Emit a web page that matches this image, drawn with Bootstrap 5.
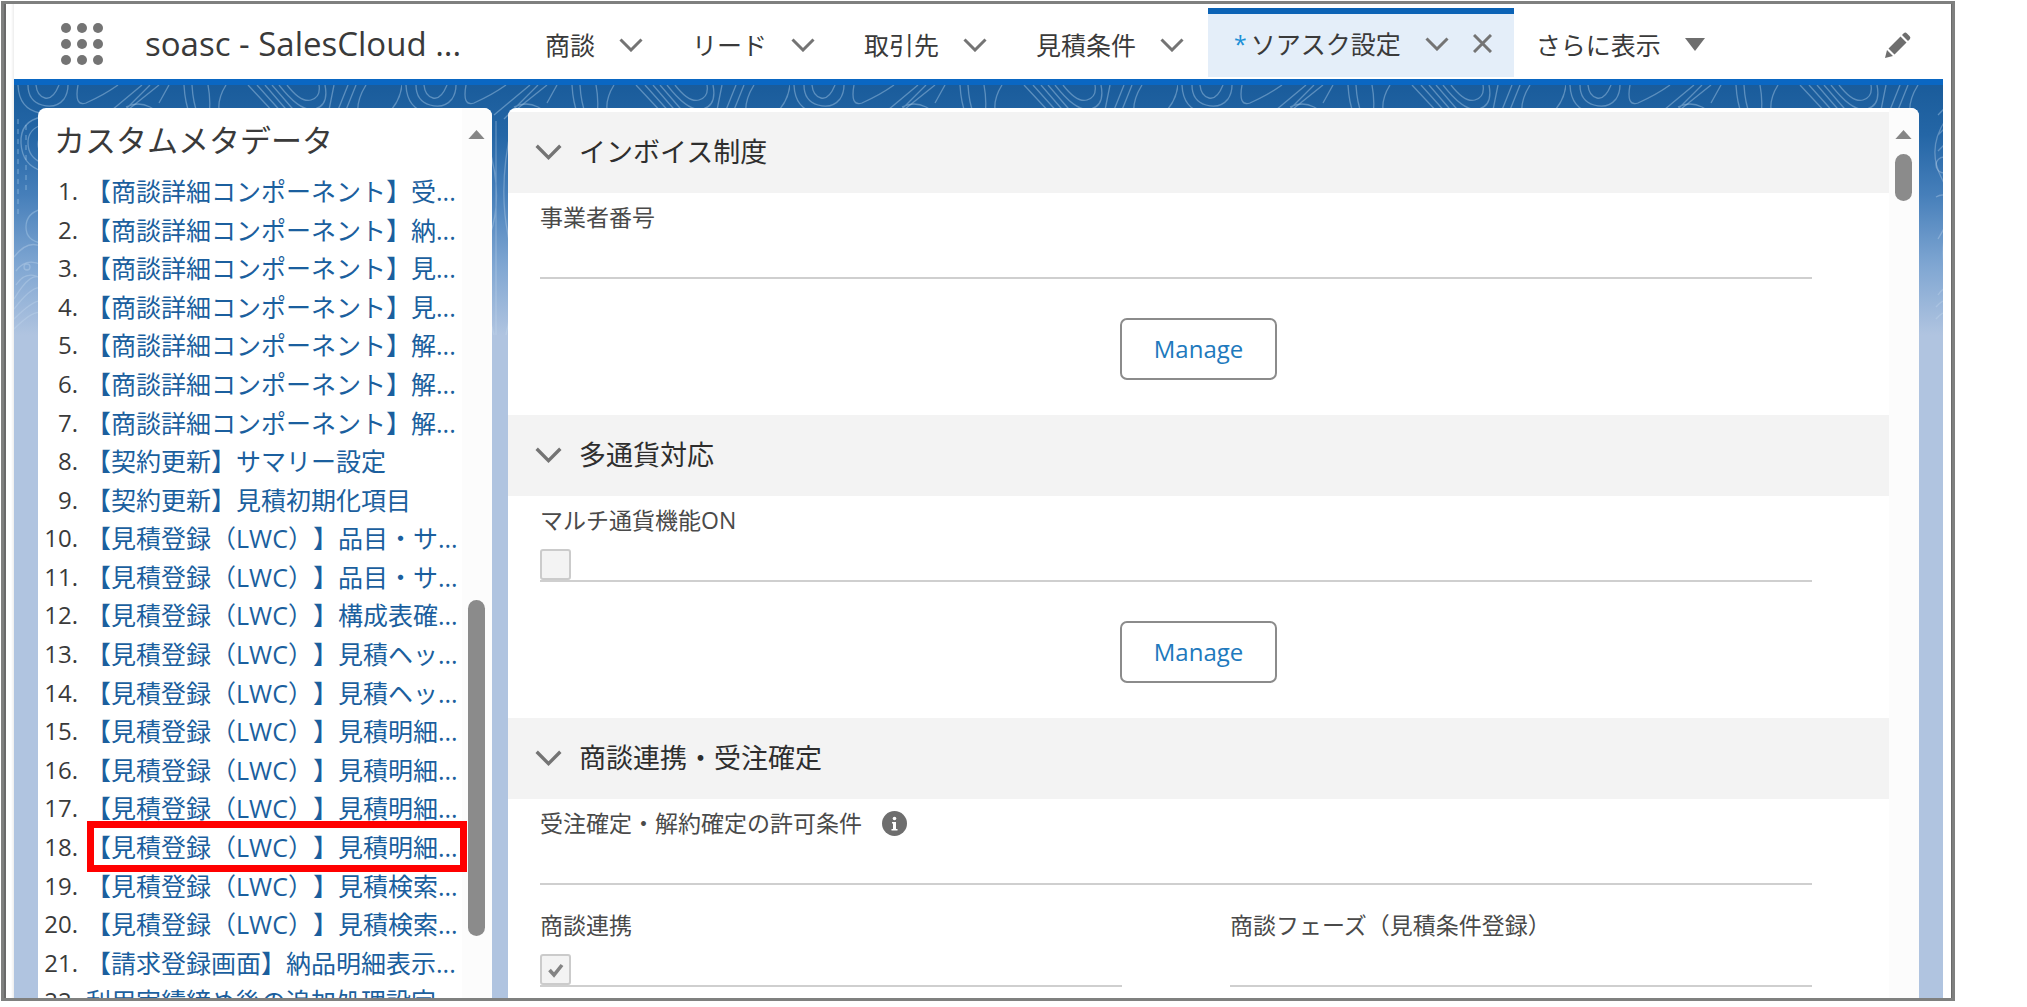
<!DOCTYPE html>
<html lang="ja">
<head>
<meta charset="utf-8">
<meta name="viewport" content="width=device-width, initial-scale=1">
<title>ソアスク設定</title>
<link rel="stylesheet" href="https://cdn.jsdelivr.net/npm/bootstrap@5.3.0/dist/css/bootstrap.min.css">
<style>
  :root { --ink: #3a3a3a; --icon: #747474; --link: #1b5f9e; --rule: #cfcfcf; }
  body { height: 100vh; padding: 1px 72px 6px 1px; overflow: hidden; background: #fff; color: var(--ink);
    font-family: "Open Sans", "Noto Sans CJK JP", sans-serif; font-size: 25px; line-height: 38px;
    text-spacing-trim: space-all; font-feature-settings: "chws" 0, "halt" 0; }
  .window-frame { border: 3px solid #7f807f; height: 100%; }
  .window-inner { border-left: 2px solid #6a6a6a; border-right: 1px solid #6a6a6a; padding: 0 8px; background: linear-gradient(90deg, #fff 5px, #ededed 8px, #fff 12px); }
  a { text-decoration: none; color: inherit; }

  .app-nav { height: 75px; background: #fff; }
  .launcher { width: 42px; margin-left: 47px; padding-top: 4px; }
  .app-name { width: 350px; margin-left: 42px; margin-right: 25px; padding-top: 4px; font-size: 33px; }
  .app-name, .tab-link { white-space: nowrap; }
  .tab-link { padding: 6px 24px 0 25px; gap: 24px; align-items: center; display: flex; }
  .tab-link.current { margin-top: 4px; padding: 0 22px 4px 26px; border-top: 6px solid #0b63b6; background: #e4eef9; margin-bottom: 2px; }
  .tab-link.current + .tab-link { padding-left: 22px; }
  .tab-link svg, .launcher svg { flex: none; display: block; }
  .star { color: #1b8fd6; margin-right: -20px; font-size: 23px; }
  .icon-btn { border: 0; background: none; padding: 0; line-height: 0; }

  .stage { border-top: 6px solid #0a67c3; padding: 23px 24px 0; gap: 16px;
    background: linear-gradient(#1a5c9b 0, #2466a6 50px, #467fba 110px, #7fa6d2 180px, #b0c4e0 250px); }
  .contours { position: absolute; top: 0; left: 0; width: 100%; height: 250px; }
  .pane { background: #fff; border-radius: 8px 8px 0 0; overflow: hidden; position: relative; }
  .side-pane { width: 454px; flex: none; }
  .side-title { font-size: 31px; line-height: 48px; padding: 8px 0 8px 16px; margin: 0; font-weight: 400; }
  .meta-list { list-style: none; margin: 0 0 -23px; padding: 0; display: grid; grid-auto-rows: 1fr; flex: 1; }
  .meta-list li { position: relative; display: flex; white-space: nowrap; }
  .meta-no { width: 40px; text-align: right; margin-right: 8px; flex: none; font-size: 24px; }
  .meta-list a { color: var(--link); }
  .picked::after { content: ""; position: absolute; inset: -7px -5px -5px 49px; border: 7px solid #f00; z-index: 1; }
  .track { width: 30px; flex: none; background: #fcfcfc; padding: 22px 7px 0 6px; }
  .thumb { background: #8b8b8b; border-radius: 9px; width: 17px; }
  .thumb-low { margin-top: 461px; height: 336px; }
  .thumb-top { margin-top: 15px; height: 47px; }
  .track svg { display: block; }

  .sect-head { height: 81px; background: #f3f3f3; padding: 0 0 0 27px; font-size: 27px; font-weight: 400; color: #2e2e2e; margin: 0; }
  .sect-head button { color: inherit; border: 0; background: none; padding: 0; gap: 17px; }
  .sect-body { padding: 0 77px 35px 32px; }
  .fieldbox { height: 86px; border-bottom: 2px solid var(--rule); padding-top: 6px; }
  .fieldbox label { font-size: 23px; line-height: 36px; display: block; color: #4a4a4a; }
  .fieldbox input[type=text] { border: 0; width: 100%; height: 40px; display: block; padding: 0; background: none; }
  .tip-row { gap: 20px; }
  .tick.form-check-input { display: block; width: 31px; height: 31px; margin: 11px 0 0; border: 2px solid #cbcbcb; border-radius: 3px; background-color: #f3f3f3; opacity: 1; float: none; }
  .tick.form-check-input:checked { background-color: #f3f3f3; border-color: #cbcbcb;
    background-image: url("data:image/svg+xml,%3csvg xmlns='http://www.w3.org/2000/svg' viewBox='0 0 27 27'%3e%3cpath d='M7.500 14l4.500 5 8-10' fill='none' stroke='%23848484' stroke-width='3.600'/%3e%3c/svg%3e"); }
  .manage { display: block; width: 157px; height: 62px; margin: 39px auto 0; border: 2px solid #8b8b8b; border-radius: 7px; color: #2079bd; font-size: 24px; padding: 0; background: #fff; }
  .manage-line { margin-left: -32px; margin-right: -77px; }
  .pair { display: grid; grid-template-columns: 1fr 1fr; gap: 108px; margin-top: 16px; }
</style>
<script src="https://cdn.jsdelivr.net/npm/bootstrap@5.3.0/dist/js/bootstrap.bundle.min.js"></script>
</head>
<body>
<svg width="0" height="0" class="position-absolute" aria-hidden="true">
  <symbol id="chev" viewBox="0 0 24 14"><path d="M1.500 1.500L12 12 22.500 1.500" fill="none" stroke="#747474" stroke-width="3"/></symbol>
  <symbol id="up" viewBox="0 0 18 10"><path d="M0 10L9 0l9 10z" fill="#868686"/></symbol>
</svg>
<div class="window-frame">
<div class="window-inner h-100 d-flex flex-column">
  <nav class="app-nav d-flex flex-shrink-0">
    <div class="launcher d-flex align-items-center"><button class="icon-btn" aria-label="アプリケーションランチャー">
      <svg width="42" height="42" viewBox="0 0 42 42" fill="#747474"><circle cx="5" cy="5" r="5"/><circle cx="21" cy="5" r="5"/><circle cx="37" cy="5" r="5"/><circle cx="5" cy="21" r="5"/><circle cx="21" cy="21" r="5"/><circle cx="37" cy="21" r="5"/><circle cx="5" cy="37" r="5"/><circle cx="21" cy="37" r="5"/><circle cx="37" cy="37" r="5"/></svg></button></div>
    <div class="app-name d-flex align-items-center">soasc - SalesCloud ...</div>
    <a class="tab-link" href="#">商談<svg width="24" height="14"><use href="#chev"/></svg></a>
    <a class="tab-link" href="#">リード<svg width="24" height="14"><use href="#chev"/></svg></a>
    <a class="tab-link" href="#">取引先<svg width="24" height="14"><use href="#chev"/></svg></a>
    <a class="tab-link" href="#">見積条件<svg width="24" height="14"><use href="#chev"/></svg></a>
    <a class="tab-link current" href="#"><span class="star">*</span>ソアスク設定<svg width="24" height="14"><use href="#chev"/></svg><svg width="19" height="19" viewBox="0 0 19 19"><path d="M1 1l17 17M18 1L1 18" stroke="#747474" stroke-width="3"/></svg></a>
    <a class="tab-link" href="#">さらに表示<svg width="20" height="13" viewBox="0 0 20 13"><path d="M0 0h20L10 13z" fill="#6e6e6e"/></svg></a>
    <button class="icon-btn ms-auto me-4 pe-2 pt-2" aria-label="編集"><svg width="27" height="27" viewBox="0 0 27 27" fill="#6e6e6e"><path d="M1 26l2-8 6 6zM4.500 16.500L16.500 4.500l6 6-12 12zM18 3l2-2q1.500-1 3 .5l2.500 2.500q1.500 1.500.5 3l-2 2z"/></svg></button>
  </nav>
  <main class="stage position-relative d-flex flex-fill" style="min-height:0">
    <svg class="contours" aria-hidden="true">
      <defs><pattern id="topo" width="388" height="250" patternUnits="userSpaceOnUse">
        <g fill="none" stroke="#a9cbe8" stroke-opacity=".45" stroke-width="1.300">
          <path d="M14 0q0 16 14 20t22-6q4-6 4-14M22 0q1 11 9 13t14-13" />
          <path d="M4 0q1 24 22 28M64 0q-4 22 8 18 18-8 32-18M128 0L92 30M136 0l-34 34M112 22q12-6 24 0t10 14"/>
          <path d="M145 0l-30 24M155 0l-10 18M170 0q1 18 6 30M178 0q1 18 6 30M194 0q3 16 1 30M212 0q-10 16-6 30"/>
          <path d="M234 0l28 30M243 0l27 30M251 0l26 30M258 0l26 30M265 0q22 28 36 24t10-24M273 0q14 18 24 15t8-15M320 0l-6 30M334 0l-12 30M342 0l-12 30"/>
          <path d="M352 0q-10 16-8 30M388 0q-2 18-16 30"/>
          <path d="M4 34v100M12 40v70" stroke-dasharray="5 5"/>
          <path d="M28 32q-22 4-21 26t21 28M28 40q-14 4-14 18t14 20M28 50q-8 8 0 20M28 124q-16 4-16 18t16 16"/>
        </g>
        <g fill="none" stroke="#c4d9ee" stroke-opacity=".35" stroke-width="1.300">
          <path d="M0 172q14-18 28-10M2 186q10-14 26-6M2 200q10-16 26-6M0 214q18-30 28-20M0 224q20-26 28-20M0 234q20-20 28-18M0 244q20-20 28-16"/>
          <circle cx="13" cy="182" r="3"/>
          <path d="M94 36v214M110 40q-14 60-4 110t-2 100M86 60q16 50 2 90t4 100M380 34q-20 30-4 60t-4 60M372 50l16-16M372 66l16-16M370 112q18-10 10 30t6 60M372 210q6-10 16-6M370 222q8-10 18-6M370 234q8-10 18-6"/>
          <circle cx="378" cy="80" r="8"/>
        </g>
      </pattern></defs>
      <rect width="100%" height="250" fill="url(#topo)"/>
    </svg>

    <aside class="pane side-pane d-flex">
      <div class="flex-fill d-flex flex-column" style="min-width:0">
        <h1 class="side-title">カスタムメタデータ</h1>
        <ol class="meta-list">
          <li><span class="meta-no">1.</span><a href="#">【商談詳細コンポーネント】受...</a></li>
          <li><span class="meta-no">2.</span><a href="#">【商談詳細コンポーネント】納...</a></li>
          <li><span class="meta-no">3.</span><a href="#">【商談詳細コンポーネント】見...</a></li>
          <li><span class="meta-no">4.</span><a href="#">【商談詳細コンポーネント】見...</a></li>
          <li><span class="meta-no">5.</span><a href="#">【商談詳細コンポーネント】解...</a></li>
          <li><span class="meta-no">6.</span><a href="#">【商談詳細コンポーネント】解...</a></li>
          <li><span class="meta-no">7.</span><a href="#">【商談詳細コンポーネント】解...</a></li>
          <li><span class="meta-no">8.</span><a href="#">【契約更新】サマリー設定</a></li>
          <li><span class="meta-no">9.</span><a href="#">【契約更新】見積初期化項目</a></li>
          <li><span class="meta-no">10.</span><a href="#">【見積登録（LWC）】品目・サ...</a></li>
          <li><span class="meta-no">11.</span><a href="#">【見積登録（LWC）】品目・サ...</a></li>
          <li><span class="meta-no">12.</span><a href="#">【見積登録（LWC）】構成表確...</a></li>
          <li><span class="meta-no">13.</span><a href="#">【見積登録（LWC）】見積ヘッ...</a></li>
          <li><span class="meta-no">14.</span><a href="#">【見積登録（LWC）】見積ヘッ...</a></li>
          <li><span class="meta-no">15.</span><a href="#">【見積登録（LWC）】見積明細...</a></li>
          <li><span class="meta-no">16.</span><a href="#">【見積登録（LWC）】見積明細...</a></li>
          <li><span class="meta-no">17.</span><a href="#">【見積登録（LWC）】見積明細...</a></li>
          <li class="picked"><span class="meta-no">18.</span><a href="#">【見積登録（LWC）】見積明細...</a></li>
          <li><span class="meta-no">19.</span><a href="#">【見積登録（LWC）】見積検索...</a></li>
          <li><span class="meta-no">20.</span><a href="#">【見積登録（LWC）】見積検索...</a></li>
          <li><span class="meta-no">21.</span><a href="#">【請求登録画面】納品明細表示...</a></li>
          <li><span class="meta-no">22.</span><a href="#">利用実績締め後の追加処理設定</a></li>
        </ol>
      </div>
      <div class="track"><svg width="17" height="9"><use href="#up"/></svg><div class="thumb thumb-low"></div></div>
    </aside>

    <section class="pane flex-fill d-flex">
      <div class="flex-fill pt-1">
        <h2 class="sect-head d-flex align-items-center"><button class="d-flex align-items-center"><svg width="27" height="16"><use href="#chev"/></svg>インボイス制度</button></h2>
        <div class="sect-body">
          <div class="fieldbox"><label for="bizno">事業者番号</label><input type="text" id="bizno" readonly></div>
          <div class="manage-line"><button class="btn manage">Manage</button></div>
        </div>
        <h2 class="sect-head d-flex align-items-center"><button class="d-flex align-items-center"><svg width="27" height="16"><use href="#chev"/></svg>多通貨対応</button></h2>
        <div class="sect-body">
          <div class="fieldbox"><label for="multi">マルチ通貨機能ON</label><input class="form-check-input tick" type="checkbox" id="multi" disabled></div>
          <div class="manage-line"><button class="btn manage">Manage</button></div>
        </div>
        <h2 class="sect-head d-flex align-items-center"><button class="d-flex align-items-center"><svg width="27" height="16"><use href="#chev"/></svg>商談連携・受注確定</button></h2>
        <div class="sect-body">
          <div class="fieldbox"><div class="tip-row d-flex align-items-center"><label for="cond">受注確定・解約確定の許可条件</label><svg width="25" height="25" viewBox="0 0 25 25"><circle cx="12.500" cy="12.500" r="12.500" fill="#6e6e6e"/><circle cx="12.500" cy="7.500" r="1.800" fill="#fff"/><path d="M10 11h4v7h1.500v1.500h-6V18H11v-5.500h-1z" fill="#fff"/></svg></div><input type="text" id="cond" readonly></div>
          <div class="pair">
            <div class="fieldbox"><label for="link">商談連携</label><input class="form-check-input tick" type="checkbox" id="link" checked disabled></div>
            <div class="fieldbox"><label for="phase">商談フェーズ（見積条件登録）</label><input type="text" id="phase" readonly></div>
          </div>
        </div>
      </div>
      <div class="track"><svg width="17" height="9"><use href="#up"/></svg><div class="thumb thumb-top"></div></div>
    </section>
  </main>
</div>
</div>
</body>
</html>
